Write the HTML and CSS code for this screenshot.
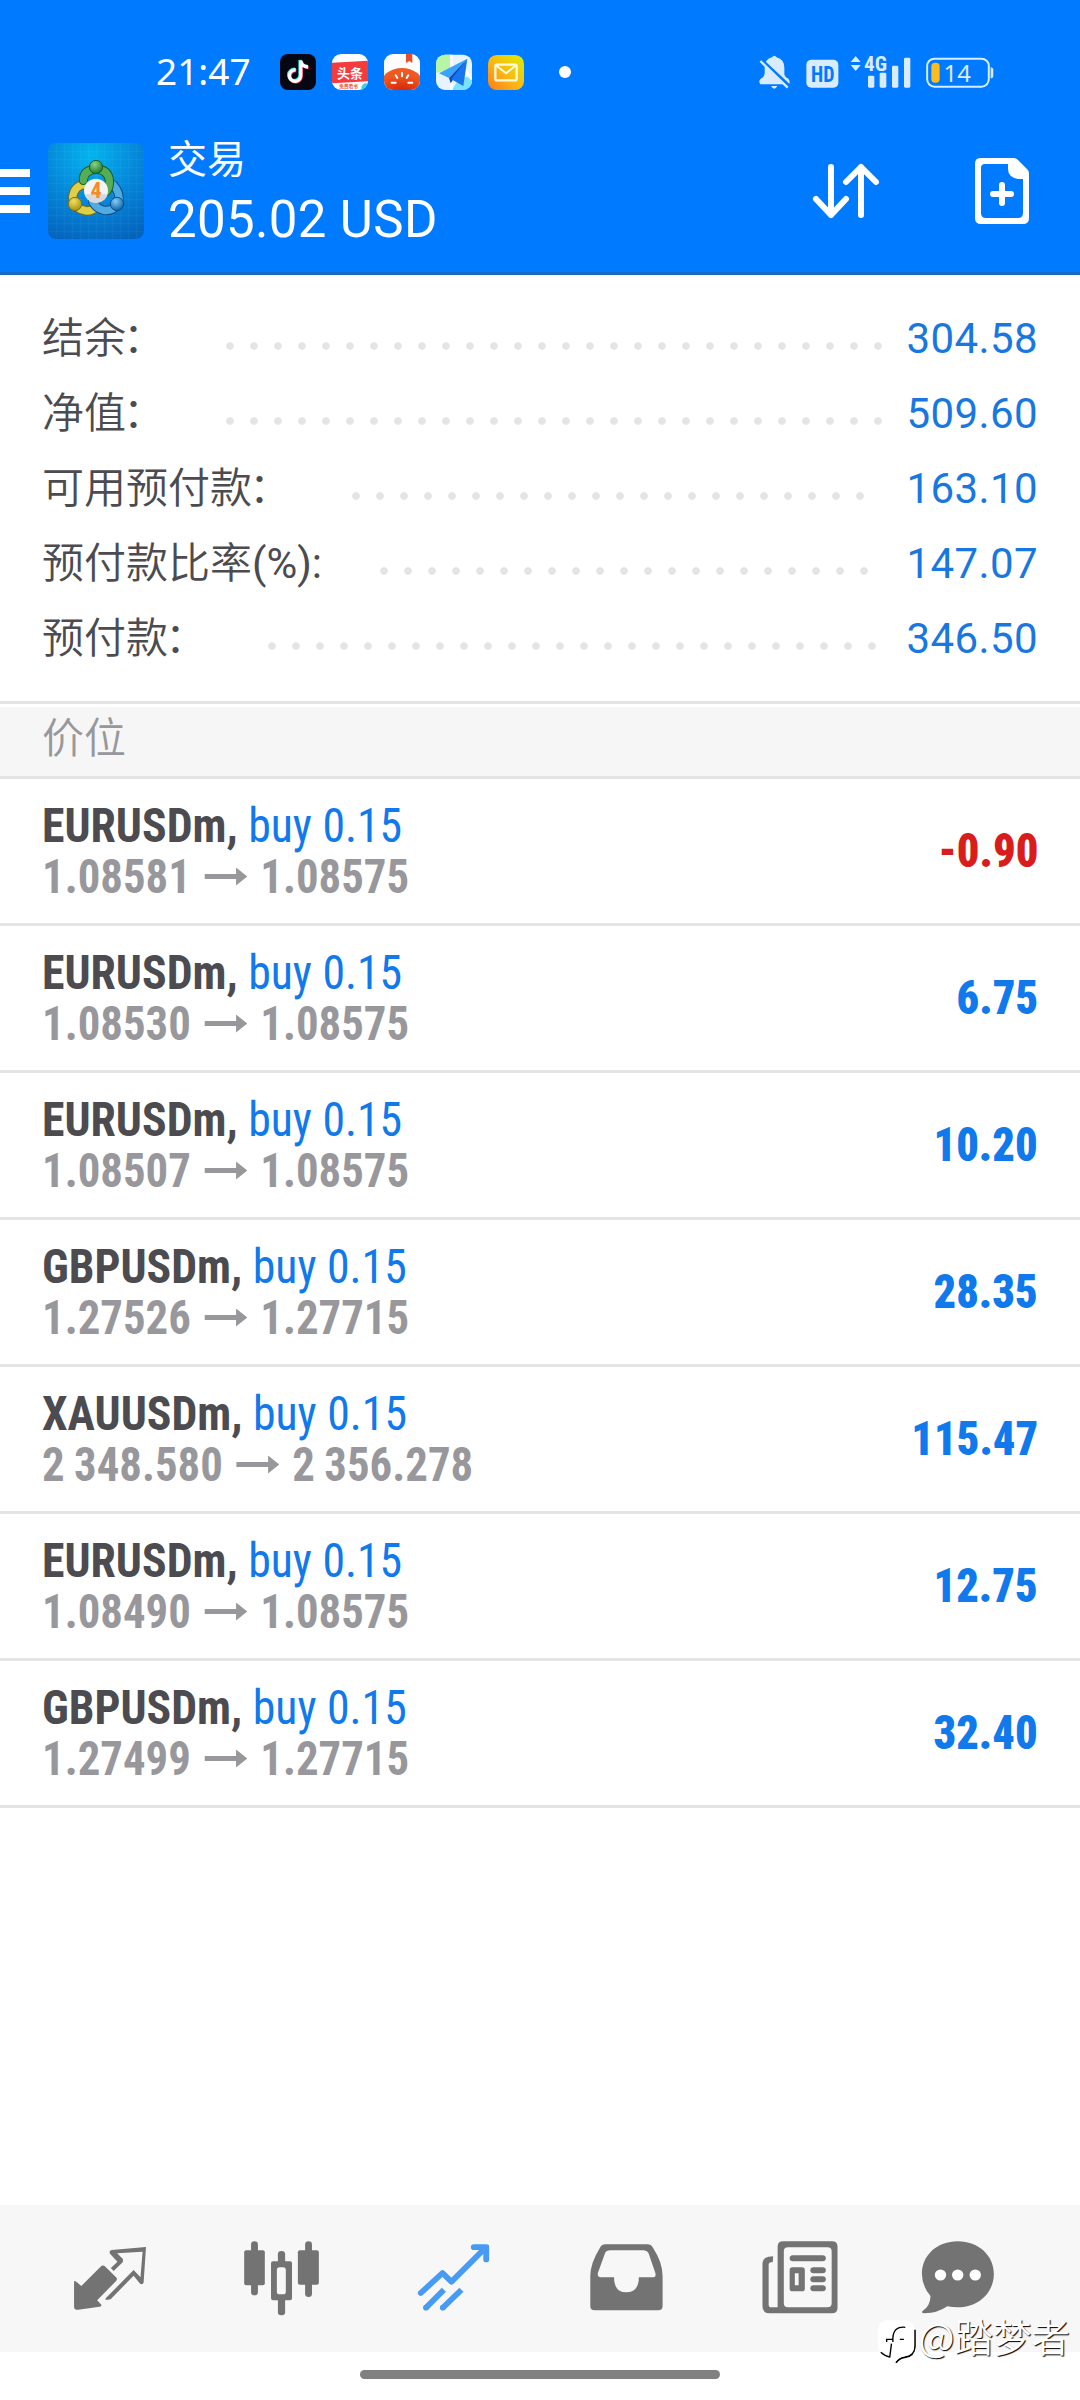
FILE: index.html
```html
<!DOCTYPE html>
<html lang="zh"><head><meta charset="utf-8"><title>交易</title><link rel="stylesheet" href="styles.css"></head>
<body>
<header class="top">
  <div class="status">
    <span class="clock">21:47</span>
    <svg class="apps" viewBox="0 0 900 108" width="300" height="36">
      <defs>
        <linearGradient id="mail" x1="0" y1="1" x2="1" y2="0"><stop offset="0" stop-color="#ff7a1c"/><stop offset=".45" stop-color="#fbb614"/><stop offset="1" stop-color="#d8f000"/></linearGradient>
        <radialGradient id="tomato" cx=".5" cy=".9" r=".7"><stop offset="0" stop-color="#cf1500"/><stop offset="1" stop-color="#f05a22"/></radialGradient>
        <clipPath id="c1"><rect x="156" width="108" height="108" rx="27"/></clipPath>
        <clipPath id="c2"><rect x="312" width="108" height="108" rx="27"/></clipPath>
        <clipPath id="c3"><rect x="468" y="2" width="108" height="106" rx="27"/></clipPath>
      </defs>
      <rect width="108" height="108" rx="24" fill="#070713"/>
      <g fill="none" stroke-width="10"><path d="M45 46a17 17 0 1 0 15 17V18c2 12 10 18 22 19" stroke="#25e5dc"/><path d="M49 50a17 17 0 1 0 15 17V22c2 12 10 18 22 19" stroke="#f5365c"/><path d="M47 48a17 17 0 1 0 15 17V20c2 12 10 18 22 19" stroke="#fff"/></g>
      <g clip-path="url(#c1)"><rect x="156" width="108" height="108" fill="#fff"/><path d="M156 26l108-6v62l-108 6z" fill="#f43c3c"/><text x="210" y="71" font-size="39" class="cjk b" text-anchor="middle" fill="#fff">头条</text><text x="206" y="103" font-size="14" class="cjk b" text-anchor="middle" fill="#ef5541">免费看书</text><circle cx="258" cy="102" r="14" fill="#3cd0e0"/></g>
      <g clip-path="url(#c2)"><rect x="312" width="108" height="108" fill="#fff"/><ellipse cx="366" cy="88" rx="62" ry="46" fill="url(#tomato)"/><path d="M378 0h19v27l-9-6-10 6z" fill="#e84e2b"/><path d="M366 57v10M347 64l5 8M385 64l-5 8M335 86h12M397 86h-12" stroke="#fff" stroke-width="6" stroke-linecap="round"/></g>
      <g clip-path="url(#c3)"><rect x="468" width="108" height="108" fill="#e6f4ff"/><path d="M468 0h42v45l-42 12z" fill="#b6f5a4"/><path d="M540 70h36v38h-60z" fill="#79e2ff"/><path d="M514 0v108M556 50l20 26" stroke="#fff" stroke-width="8"/><path d="M562 14L477 58l30 14z" fill="#38a4ff"/><path d="M562 14L507 72l5 16z" fill="#0b49c8"/><path d="M562 14L514 76l36 20z" fill="#1676ee"/></g>
      <rect x="624" y="3" width="108" height="105" rx="26" fill="url(#mail)"/><rect x="646" y="32" width="64" height="47" rx="5" fill="none" stroke="#fffbd8" stroke-width="7"/><path d="M648 34l30 24 30-24" fill="none" stroke="#fffbd8" stroke-width="6"/>
      <circle cx="855" cy="54" r="18" fill="#fff"/>
    </svg>
    <svg class="signals" viewBox="50 70 720 110" width="240" height="36.67" fill="#d9ecff">
      <path d="M95 80q7-9 14 0 23 6 23 32v20q2 7 12 12 7 10 2 17H60q-7-9 1-17 12-6 12-16v-18q0-24 22-30zM92 166h19q-9 16-19 0z"/><path d="M60 84l92 86" stroke="#007aff" stroke-width="9"/><path d="M60 91l82 80" stroke="#d9ecff" stroke-width="7"/>
      <rect x="198" y="87" width="96" height="84" rx="15"/><text x="247" y="153" font-size="65" class="cond b" text-anchor="middle" fill="#007aff" textLength="70" lengthAdjust="spacingAndGlyphs">HD</text>
      <path d="M331 94l15-18 15 18zM331 103h30l-15 18z"/><text x="371" y="121" font-size="60" class="cond b" textLength="69" lengthAdjust="spacingAndGlyphs">4G</text>
      <rect x="383" y="135" width="19" height="36" rx="4"/><rect x="418" y="126" width="20" height="45" rx="4"/><rect x="455" y="105" width="19" height="66" rx="4"/><rect x="491" y="81" width="19" height="90" rx="4"/>
      <rect x="560.500" y="84" width="185" height="84" rx="22" fill="none" stroke="#d9ecff" stroke-width="6"/><path d="M751 110q8 0 8 8v17q0 8-8 8z"/><rect x="573" y="96" width="25" height="60" rx="11" fill="#fdbc1c"/><text x="651" y="155" font-size="72" class="noto" text-anchor="middle">14</text>
    </svg>
  </div>
  <div class="bar">
    <div class="burger"><i></i><i></i><i></i></div>
    <svg class="logo" viewBox="0 0 288 288" width="96" height="96">
      <defs>
        <radialGradient id="bg" cx=".45" cy=".12" r=".95"><stop offset="0" stop-color="#03b4ee"/><stop offset=".5" stop-color="#0588da"/><stop offset="1" stop-color="#0464bd"/></radialGradient>
        <radialGradient id="g" cx=".4" cy=".3" r=".7"><stop offset="0" stop-color="#8fd08a"/><stop offset="1" stop-color="#1d7a2c"/></radialGradient>
        <radialGradient id="y" cx=".4" cy=".3" r=".7"><stop offset="0" stop-color="#f0e060"/><stop offset="1" stop-color="#a89412"/></radialGradient>
        <radialGradient id="b" cx=".4" cy=".3" r=".7"><stop offset="0" stop-color="#86cdf5"/><stop offset="1" stop-color="#0d62a8"/></radialGradient>
      </defs>
      <rect width="288" height="288" rx="24" fill="url(#bg)"/>
      <path d="M26 0v288M50 0v288M74 0v288M98 0v288M122 0v288M146 0v288M170 0v288M194 0v288M218 0v288M242 0v288M266 0v288M0 26h288M0 50h288M0 74h288M0 98h288M0 122h288M0 146h288M0 170h288M0 194h288M0 218h288M0 242h288M0 266h288" stroke="#fff" stroke-opacity=".08" stroke-width="2"/>
      <g fill="none" stroke-linecap="round">
        <path d="M112 124q-34 4-38 38 2 36 42 42 18 0 32-14" stroke="#6f6a1c" stroke-width="28"/><path d="M112 124q-34 4-38 38 2 36 42 42 18 0 32-14" stroke="#ddcf48" stroke-width="22"/>
        <path d="M196 126q22 24 16 52-14 28-46 24-22-6-32-26" stroke="#0b4f8c" stroke-width="28"/><path d="M196 126q22 24 16 52-14 28-46 24-22-6-32-26" stroke="#4fabe2" stroke-width="22"/>
        <path d="M106 112q0-30 38-34 36 2 40 34 2 18-8 32" stroke="#175f24" stroke-width="28"/><path d="M106 112q0-30 38-34 36 2 40 34 2 18-8 32" stroke="#55ad58" stroke-width="22"/>
      </g>
      <circle cx="144" cy="72" r="20" fill="url(#g)" stroke="#175f24" stroke-width="3"/><circle cx="81" cy="183" r="20" fill="url(#y)" stroke="#7b7214" stroke-width="3"/><circle cx="207" cy="183" r="20" fill="url(#b)" stroke="#0b4f8c" stroke-width="3"/>
      <circle cx="144" cy="143" r="36" fill="#f4f4f6"/><path d="M111 154h68q-8 25-35 25-26 0-33-25z" fill="#d8d8de"/><text x="144" y="166" font-size="66" class="cond b" text-anchor="middle" fill="#f48a28">4</text>
    </svg>
    <div class="titles"><div class="title">交易</div><div class="amount">205.02 USD</div></div>
    <svg class="sort" viewBox="810 158 72 66" width="72" height="66" fill="none" stroke="#fff" stroke-width="6" stroke-linecap="round" stroke-linejoin="round"><path d="M831 167v48M816 199l15 16 15-16M861 215v-48M846 182l15-15 15 15"/></svg>
    <svg class="doc" viewBox="975 158 54 66" width="54" height="66"><path fill="#fff" fill-rule="evenodd" d="M980 158h34q2 0 4 2l9 9q2 2 2 4v45q0 6-6 6h-42q-6 0-6-6v-54q0-6 5-6zm5 6q-4 0-4 4v45q0 5 5 5h32q5 0 5-5v-34h-5q-10-2-10-10v-5z"/><path d="M1002 185v18M993 194h18" stroke="#fff" stroke-width="6" stroke-linecap="round"/></svg>
  </div>
</header>
<main>
  <section class="account">
    <div class="line"><span>结余<em>：</em></span><div class="fill"><i></i></div><b>304.58</b></div>
    <div class="line"><span>净值<em>：</em></span><div class="fill"><i></i></div><b>509.60</b></div>
    <div class="line"><span>可用预付款<em>：</em></span><div class="fill"><i></i></div><b>163.10</b></div>
    <div class="line"><span>预付款比率<u>(%):</u></span><div class="fill"><i></i></div><b>147.07</b></div>
    <div class="line"><span>预付款<em>：</em></span><div class="fill"><i></i></div><b>346.50</b></div>
  </section>
  <h2 class="section">价位</h2>
  <ul class="orders">
    <li><div><p class="sym">EURUSDm, <span>buy 0.15</span></p><p class="px">1.08581<i class="arrow"></i>1.08575</p></div><strong class="loss">-0.90</strong></li>
    <li><div><p class="sym">EURUSDm, <span>buy 0.15</span></p><p class="px">1.08530<i class="arrow"></i>1.08575</p></div><strong>6.75</strong></li>
    <li><div><p class="sym">EURUSDm, <span>buy 0.15</span></p><p class="px">1.08507<i class="arrow"></i>1.08575</p></div><strong>10.20</strong></li>
    <li><div><p class="sym">GBPUSDm, <span>buy 0.15</span></p><p class="px">1.27526<i class="arrow"></i>1.27715</p></div><strong>28.35</strong></li>
    <li><div><p class="sym">XAUUSDm, <span>buy 0.15</span></p><p class="px">2 348.580<i class="arrow"></i>2 356.278</p></div><strong>115.47</strong></li>
    <li><div><p class="sym">EURUSDm, <span>buy 0.15</span></p><p class="px">1.08490<i class="arrow"></i>1.08575</p></div><strong>12.75</strong></li>
    <li><div><p class="sym">GBPUSDm, <span>buy 0.15</span></p><p class="px">1.27499<i class="arrow"></i>1.27715</p></div><strong>32.40</strong></li>
  </ul>
</main>
<nav class="tabs">
  <svg viewBox="197.400 140 244 240" preserveAspectRatio="none"><path d="M215 272q6 0 10 5l11 10 56-58q7-7 14 0l31 32q5 5 0 11l-55 58 13 14q-1 5-6 5l-62 9q-12 3-12-10z"/><path fill-rule="evenodd" d="M424 170l-7 107q-3 7-10 3l-19-24-66 70q-4 3-16 2l1-4 81-85 20 22 6-77-74 5 17 17v9l-27 27-8-9 19-19-21-23q-5-9 4-12z"/></svg>
  <svg viewBox="696.900 140 244 240" preserveAspectRatio="none"><rect x="709" y="180" width="60" height="105" rx="6"/><rect x="729" y="153" width="20" height="162" rx="10"/><rect x="865" y="180" width="61" height="103" rx="6"/><rect x="886" y="153" width="20" height="167" rx="10"/><rect x="807" y="182" width="21" height="40" rx="10"/><rect x="807" y="320" width="21" height="55" rx="9"/><path fill-rule="evenodd" d="M793 213h49q6 0 6 6v105q0 6-6 6h-49q-6 0-6-6V219q0-6 6-6zm19 18q-8 0-8 8v65q0 8 8 8h10q8 0 8-8v-65q0-8-8-8z"/></svg>
  <svg class="on" viewBox="1196.400 140 244 240" preserveAspectRatio="none"><path d="M1222 308l63-60 26 26 98-101M1376 170.500h36v37" fill="none" stroke="#479bf5" stroke-width="17" stroke-linecap="round" stroke-linejoin="round"/><path d="M1404 164h16v30z" fill="#479bf5"/><path d="M1237 352l52-54M1286 352l54-54" fill="none" stroke="#479bf5" stroke-width="17"/><circle cx="1237" cy="352" r="8.500" fill="#479bf5"/><circle cx="1286" cy="352" r="8.500" fill="#479bf5"/></svg>
  <svg viewBox="127.700 140 244 240" preserveAspectRatio="none"><path fill-rule="evenodd" d="M190 162h122q10 0 16 10 28 44 28 85v90q0 13-13 13H159q-13 0-13-13v-90q0-38 28-85 6-10 16-10zm14 18q-12 0-15 8l-21 60q-2 13 8 13h39q0 45 35 45 37 0 37-45h40q11 0 8-13l-20-60q-4-8-14-8z"/></svg>
  <svg viewBox="627.200 140 244 240" preserveAspectRatio="none"><path fill-rule="evenodd" d="M706 153h142q16 0 16 16v184q0 16-16 16H668q-22 0-22-22V220q0-22 31-22l-1 17q-12 0-12 8v120q0 8 8 8h18V169q0-16 16-16zm14 18q-12 0-12 12v156q0 12 12 12h115q12 0 12-12V183q0-12-12-12z"/><rect x="725" y="195" width="105" height="18" rx="9"/><rect x="785" y="231" width="45" height="18" rx="9"/><rect x="785" y="258" width="45" height="18" rx="9"/><rect x="785" y="285" width="45" height="18" rx="9"/><path fill-rule="evenodd" d="M733 231h28q8 0 8 8v56q0 8-8 8h-28q-8 0-8-8v-56q0-8 8-8zm7 18v36h11v-36z"/></svg>
  <svg viewBox="1126.700 140 244 240" preserveAspectRatio="none"><path d="M1213 153c60 0 105 42 105 98s-45 100-105 100q-16 0-30-3-30 21-66 21-12 0-6-7 22-14 23-45-25-30-25-66c0-56 44-98 104-98z"/><g fill="#fff"><circle cx="1163" cy="254" r="16.500"/><circle cx="1213" cy="254" r="16.500"/><circle cx="1264" cy="254" r="16.500"/></g></svg>
</nav>
<footer class="gesture"><i></i></footer>
<div class="mark"><svg viewBox="975 388 116 138" width="40" height="46" preserveAspectRatio="none"><path d="M1085 420v50q-2 30-30 33-15 2-25 16" fill="none" stroke="#000" stroke-width="5"/><path d="M1007 392h48q28 0 28 28v50q0 28-28 30-16 3-26 16-5-10-2-14-49-3-49-30v-52q2-28 29-28z" fill="#fff"/><path d="M1057 413q-34-4-36 32v12M1003 457v-8h20M1041 449h12M1017 462l-5 40q-14-2-26-14" fill="none" stroke="#000" stroke-width="4"/></svg><span>@踏梦者</span></div>
</body></html>
```
FILE: styles.css
```css
* { box-sizing: border-box; }
body { margin: 0; width: 1080px; height: 2400px; display: flex; flex-direction: column; background: #fff; overflow: hidden; position: relative; font-family: Roboto, "Noto Sans CJK SC", sans-serif; }
svg { display: block; flex: none; overflow: visible; }
p, h2, ul { margin: 0; padding: 0; }
.cjk { font-family: "Noto Sans CJK SC", sans-serif; }
.noto { font-family: "Noto Sans", sans-serif; }
.cond { font-family: "Roboto Condensed", Roboto, sans-serif; font-stretch: 75%; }
.b { font-weight: 700; }

.top { height: 275px; background: #007aff; border-bottom: 3px solid #1769c4; color: #fff; }
.status { height: 120px; padding: 24px 83px 0 156px; display: flex; align-items: center; }
.clock { width: 124px; padding-bottom: 2px; font: 37px/46px "Noto Sans", sans-serif; }
.signals { margin-left: auto; }
.bar { display: flex; align-items: center; height: 142px; padding-right: 51px; }
.burger { width: 30px; display: flex; flex-direction: column; gap: 10px; margin-right: 18px; }
.burger i { height: 8px; background: #fff; }
.titles { margin-left: 24px; padding-top: 4px; flex: 1; }
.title { font-size: 39px; line-height: 54px; }
.amount { font-size: 51px; line-height: 66px; letter-spacing: .35px; }
.doc { margin-left: 93px; }

.account { height: 429px; padding: 26px 42px 0; border-bottom: 3px solid #e4e4e4; }
.line { display: flex; height: 75px; line-height: 76px; font-size: 42px; color: #4b4b50; }
.line span { font-weight: 350; }
.line em { font-style: normal; margin: 0 3px 0 -3px; }
.line u { text-decoration: none; font-weight: 400; }
.line b { width: 132px; text-align: right; font-weight: 400; letter-spacing: .4px; color: #1878e0; white-space: nowrap; }
.fill { flex: 1; margin: 0 13px 0 50px; }
.fill i { display: block; width: round(down, 100%, 24px); height: 24px; margin-top: 33px; background: radial-gradient(circle, #e4e4e4 3.4px, transparent 4.2px) 0 0 / 24px 24px; }

.section { height: 72px; margin-top: 3px; padding-left: 42px; background: #f6f6f6; border-bottom: 3px solid #e4e4e4; font-size: 42px; font-weight: 350; line-height: 63px; color: #98989c; }
.orders { list-style: none; font-family: "Roboto Condensed", Roboto, sans-serif; font-stretch: 75%; font-size: 48px; font-weight: 700; }
.orders li { height: 147px; padding: 0 42px; display: flex; justify-content: space-between; align-items: center; border-bottom: 3px solid #e4e4e4; }
.orders p { line-height: 51px; white-space: nowrap; }
.sym { color: #4b4b50; transform: scaleX(.953); transform-origin: left; }
.sym span { color: #1079ec; font-weight: 400; }
.px { color: #98989c; display: flex; align-items: center; word-spacing: -1px; transform: scaleX(.933); transform-origin: left; }
.arrow { width: 46px; height: 18px; margin: 0 14px 0 14.5px; background: #98989c; clip-path: polygon(0 6.500px, 34px 6.500px, 34px 0, 46px 9px, 34px 18px, 34px 11.500px, 0 11.500px); }
.orders strong { color: #1079ec; padding-bottom: 1px; transform: scaleX(.925); transform-origin: right; }
.orders .loss { color: #d91d1d; }

.tabs { margin-top: auto; height: 147px; padding: 0 24px; background: #f7f7f7; display: grid; grid-template-columns: repeat(6, 172px); justify-items: center; fill: #737373; }
.tabs svg { width: 84px; height: 80px; margin-top: 32px; }
.gesture { height: 48px; padding-top: 18px; }
.gesture i { display: block; width: 360px; height: 9px; margin: 0 auto; border-radius: 5px; background: #808080; }
.mark { position: absolute; right: 10px; top: 2319px; display: flex; align-items: flex-start; color: #fff; }
.mark span { margin-left: 2px; font: 350 38.5px/32px "Noto Sans CJK SC", sans-serif; text-shadow: 1px 1px 1px #000; }
```
